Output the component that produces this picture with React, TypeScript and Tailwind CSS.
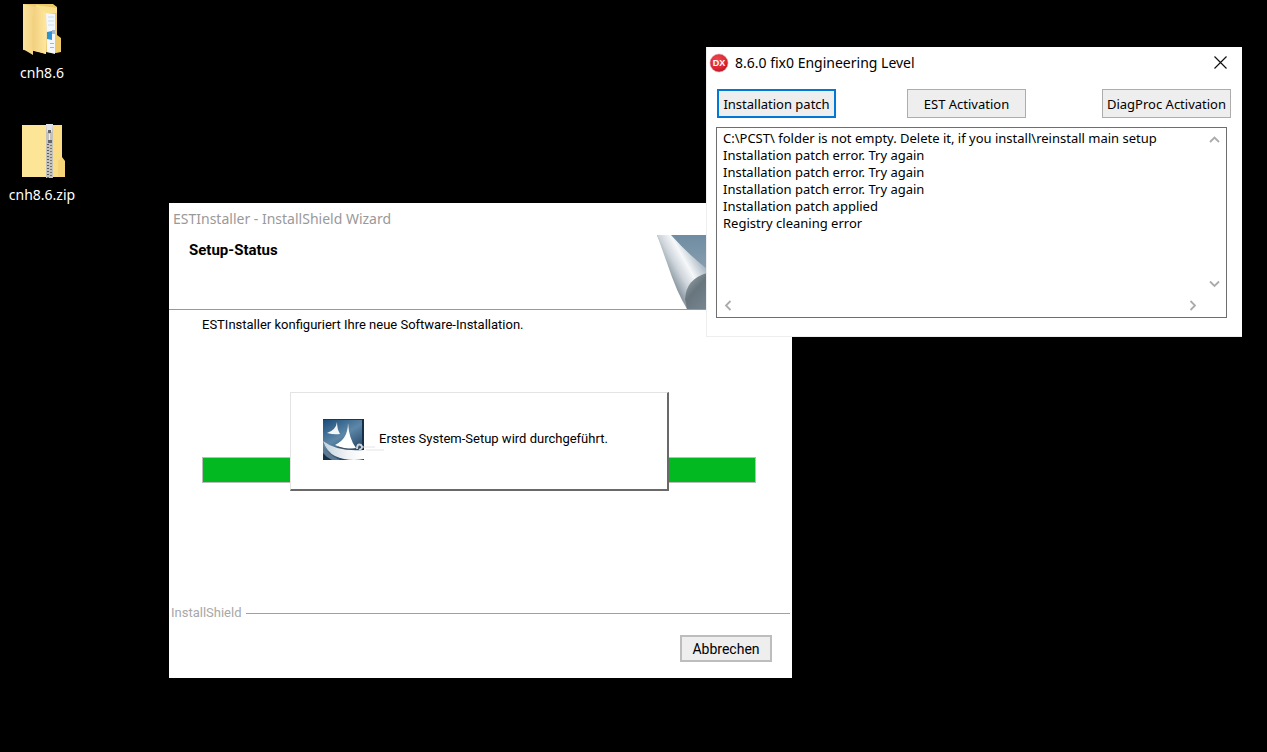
import { useState } from "react";

const LOG_LINES = [
  "C:\\PCST\\ folder is not empty. Delete it, if you install\\reinstall main setup",
  "Installation patch error. Try again",
  "Installation patch error. Try again",
  "Installation patch error. Try again",
  "Installation patch applied",
  "Registry cleaning error",
];

function FolderIcon() {
  return (
    <svg width="40" height="52" viewBox="0 0 40 52" aria-hidden="true">
      <defs>
        <linearGradient id="flap" x1="0" x2="1">
          <stop offset="0" stopColor="#fbe49a" />
          <stop offset="0.5" stopColor="#f3d284" />
          <stop offset="1" stopColor="#ffe79b" />
        </linearGradient>
      </defs>
      <path d="M1 0H31L35 3V31L39 34V48L34 49L1 46Z" fill="#edc968" />
      <path d="M24 9L33 10V50L25 48Z" fill="#f4f8fd" />
      <path d="M26 13h6M26 17h6M26 21h6" stroke="#c9dcef" />
      <path d="M25 28L30 27V36L25 35Z" fill="#2f93cf" />
      <path d="M30 26h3v4h-3zM28 39h4v1h-4zM28 43h4v1h-4z" fill="#9fb9d3" />
      <path d="M14 1L35 4V9L24 9V50L12 47Z" fill="#fbe08b" />
      <path d="M1 0L16 3L24 9V50L11 46V51L1 45Z" fill="url(#flap)" />
      <path d="M11 47V12" stroke="#efd07c" />
    </svg>
  );
}

function ZipIcon() {
  return (
    <svg width="40" height="54" viewBox="0 0 40 54" className="overflow-visible" aria-hidden="true">
      <path d="M0 1H40V33L43 37V53H0Z" fill="#f5d578" />
      <path d="M0 1H25V53H0Z" fill="#fde597" />
      <path d="M31 1H40V33L36 37V53H31Z" fill="#fbdd86" />
      <rect x="24" y="0" width="7" height="54" fill="#c3c2bd" />
      <path d="M26 20V54" stroke="#5e5d59" strokeWidth="2" strokeDasharray="1 2" />
      <path d="M29 21V54" stroke="#77756f" strokeWidth="2" strokeDasharray="1 2" />
      <path d="M24 0h7l-1 8h-5z" fill="#e1e3e7" />
      <path d="M26 6h3v3h-3zM26 16h4v3h-4z" fill="#65666b" />
      <path d="M27.5 10v6" stroke="#eee" />
    </svg>
  );
}

function BannerArt() {
  return (
    <svg width="135" height="74" viewBox="0 0 135 74" aria-hidden="true">
      <defs>
        <linearGradient id="curl" gradientUnits="userSpaceOnUse" x1="15" y1="45" x2="45" y2="28">
          <stop offset="0" stopColor="#8d9aa3" />
          <stop offset="0.3" stopColor="#cdd4da" />
          <stop offset="0.6" stopColor="#f6f8fa" />
          <stop offset="1" stopColor="#a9b7c2" />
        </linearGradient>
        <linearGradient id="sky" x1="0" y1="0" x2="0" y2="1">
          <stop offset="0" stopColor="#6f8ca2" />
          <stop offset="0.5" stopColor="#8aa0af" />
          <stop offset="1" stopColor="#667682" />
        </linearGradient>
        <linearGradient id="roll" x1="0" y1="0" x2="1" y2="1">
          <stop offset="0" stopColor="#a2acb3" />
          <stop offset="0.4" stopColor="#68757d" />
          <stop offset="1" stopColor="#7b8c99" />
        </linearGradient>
      </defs>
      <path d="M0 0H135V74H31Z" fill="url(#sky)" />
      <path d="M0 0H14Q30 18 50 34V38Q30 46 30 74Q20 58 10 28Z" fill="url(#curl)" />
      <path d="M50 38Q29 44 28 64L30 74H60V38Z" fill="url(#roll)" />
    </svg>
  );
}

function SailIcon() {
  return (
    <svg width="62" height="41" viewBox="0 0 62 41" className="shrink-0" aria-hidden="true">
      <defs>
        <linearGradient id="sea" x1="0" y1="0" x2="0.6" y2="1">
          <stop offset="0" stopColor="#174a78" />
          <stop offset="0.5" stopColor="#5d87a8" />
          <stop offset="1" stopColor="#1d3c5a" />
        </linearGradient>
        <linearGradient id="wave" x1="0" x2="1">
          <stop offset="0" stopColor="#c6d2dd" />
          <stop offset="0.6" stopColor="#f2f4f6" />
          <stop offset="1" stopColor="#fff" />
        </linearGradient>
      </defs>
      <rect width="41" height="41" fill="url(#sea)" />
      <path d="M0 0H41V1H0Z" fill="#163a5c" />
      <path d="M39 0h2v31h-2z" fill="#152f49" />
      <path d="M14 3Q14 10 17 15Q11 16 4 14Q13 11 14 3Z" fill="#f3f5f6" />
      <path d="M25 4Q26 20 33 29Q22 31 12 26Q25 20 25 4Z" fill="#fff" />
      <path d="M15 28Q25 32 34 30" stroke="#4c4f53" fill="none" />
      <path d="M0 22Q14 33 41 31V40Q25 43 12 37Q4 33 0 22Z" fill="url(#wave)" />
      <path d="M0 27Q5 36 17 41H0Z" fill="#5f7892" />
      <path d="M0 34Q4 39 9 41H0Z" fill="#172f45" />
      <path d="M34 30q0-6 4-4q3 3-2 5" stroke="#ccd2d8" strokeWidth="2" fill="none" />
      <path d="M40 28H52M43 31H61" stroke="#e3e5e7" strokeWidth="1" />
    </svg>
  );
}

function Chevron({ d }: { d: string }) {
  return (
    <svg width="11" height="11" viewBox="0 0 11 11" fill="none" stroke="#ababab" strokeWidth="1.8" aria-hidden="true">
      <path d={d} />
    </svg>
  );
}

function DesktopItem({ label, children }: { label: string; children: React.ReactNode }) {
  return (
    <button type="button" className="flex h-[122px] w-20 flex-col items-center font-['Noto_Sans',sans-serif] text-sm leading-5 text-white">
      <span className="flex h-[54px] items-end">{children}</span>
      <span className="mt-[7px]">{label}</span>
    </button>
  );
}

function InstallerWindow() {
  return (
    <section
      aria-label="ESTInstaller"
      className="absolute left-[169px] top-[203px] flex h-[475px] w-[623px] flex-col bg-white font-['Roboto',sans-serif] text-[13px] leading-4 text-black"
    >
      <h1 className="h-8 pl-1 font-['Noto_Sans',sans-serif] text-sm leading-8 text-[#999]">
        ESTInstaller - InstallShield Wizard
      </h1>
      <header className="flex justify-between border-b border-[#999]">
        <h2 className="pl-5 pt-[7px] text-[15px] font-bold leading-4">Setup-Status</h2>
        <BannerArt />
      </header>
      <main className="relative flex-1 pl-[33px] pr-9 pt-[7px]">
        <p>ESTInstaller konfiguriert Ihre neue Software-Installation.</p>
        <div
          role="progressbar"
          aria-label="Installation"
          aria-valuenow={100}
          className="mt-[124px] h-[26px] border border-[#bcbcbc] bg-[#02b921]"
        />
        <div className="absolute left-[121px] top-[82px] flex h-[99px] w-[379px] items-center gap-4 border-b-2 border-l border-r-2 border-t border-b-[#696969] border-l-[#e3e3e3] border-r-[#696969] border-t-[#e3e3e3] bg-white pb-1 pl-8">
          <span className="flex w-10">
            <SailIcon />
          </span>
          <p>Erstes System-Setup wird durchgeführt.</p>
        </div>
      </main>
      <footer>
        <div className="flex items-center gap-1 pl-[2px] pr-[2px] text-[#a8a8a8]">
          <span>InstallShield</span>
          <span className="h-px flex-1 bg-[#a0a0a0]" />
        </div>
        <div className="flex justify-end pb-4 pr-5 pt-[14px]">
          <button type="button" className="h-[27px] w-[92px] border-2 border-[#bdbdbd] bg-[#eee] text-sm leading-4">
            Abbrechen
          </button>
        </div>
      </footer>
    </section>
  );
}

function PatchWindow() {
  const [log, setLog] = useState(LOG_LINES.join("\n"));
  return (
    <section
      aria-label="Engineering Level"
      className="absolute left-[706px] top-[47px] flex h-[290px] w-[536px] flex-col bg-white pb-[19px] pl-[10px] pr-[15px] font-['Noto_Sans',sans-serif] text-[13px] text-black shadow-[inset_1px_-1px_0_#eee]"
    >
      <header className="-ml-2 -mr-1 flex h-[31px] items-center gap-1.5 pl-px">
        <svg width="20" height="20" viewBox="0 0 20 20" aria-hidden="true">
          <defs>
            <radialGradient id="dx" cx="0.4" cy="0.3" r="0.75">
              <stop offset="0" stopColor="#f0444e" />
              <stop offset="0.7" stopColor="#dc2430" />
              <stop offset="1" stopColor="#a51a25" />
            </radialGradient>
          </defs>
          <circle cx="10" cy="10" r="9" fill="url(#dx)" stroke="#d5a0a3" strokeWidth="0.6" />
          <text x="10" y="13" textAnchor="middle" fontFamily="Liberation Sans" fontWeight="700" fontSize="9" fill="#fff">
            DX
          </text>
        </svg>
        <h1 className="flex-1 text-sm">8.6.0 fix0 Engineering Level</h1>
        <button type="button" aria-label="Close" className="p-1">
          <svg width="13" height="13" viewBox="0 0 13 13" stroke="#111" strokeWidth="1.2" aria-hidden="true">
            <path d="M0.5 0.5L12.5 12.5M12.5 0.5L0.5 12.5" />
          </svg>
        </button>
      </header>
      <div className="-mr-1 ml-px mt-[11px] flex leading-4">
        <button type="button" className="h-[29px] w-[119px] whitespace-nowrap border-2 border-[#0078d7] bg-[#eee]">
          Installation patch
        </button>
        <button type="button" className="ml-[71px] h-[29px] w-[119px] whitespace-nowrap border border-[#adadad] bg-[#eee]">
          EST Activation
        </button>
        <button type="button" className="ml-auto h-[29px] w-[129px] whitespace-nowrap border border-[#adadad] bg-[#eee]">
          DiagProc Activation
        </button>
      </div>
      <div className="mt-[9px] grid flex-1 grid-cols-[1fr_24px] grid-rows-[1fr_24px] border border-[#6e6e6e]">
        <textarea
          aria-label="Log"
          wrap="off"
          value={log}
          onChange={(e) => setLog(e.target.value)}
          className="resize-none overflow-hidden pl-1.5 pt-0.5 leading-[17px] outline-none"
        />
        <div className="flex flex-col items-center justify-between pb-1 pt-1.5">
          <button type="button" aria-label="Scroll up" className="block"><Chevron d="M1 8L5.5 3.5L10 8" /></button>
          <button type="button" aria-label="Scroll down" className="block"><Chevron d="M1 3.5L5.5 8L10 3.5" /></button>
        </div>
        <div className="flex items-center justify-between pl-1.5 pr-1">
          <button type="button" aria-label="Scroll left"><Chevron d="M7.5 1L3 5.5L7.5 10" /></button>
          <button type="button" aria-label="Scroll right"><Chevron d="M3.5 1L8 5.5L3.5 10" /></button>
        </div>
      </div>
    </section>
  );
}

export default function App() {
  return (
    <div className="relative min-h-screen overflow-hidden bg-black">
      <nav aria-label="Desktop" className="flex flex-col pl-0.5 pt-0.5">
        <DesktopItem label="cnh8.6"><FolderIcon /></DesktopItem>
        <DesktopItem label="cnh8.6.zip"><ZipIcon /></DesktopItem>
      </nav>
      <InstallerWindow />
      <PatchWindow />
    </div>
  );
}
